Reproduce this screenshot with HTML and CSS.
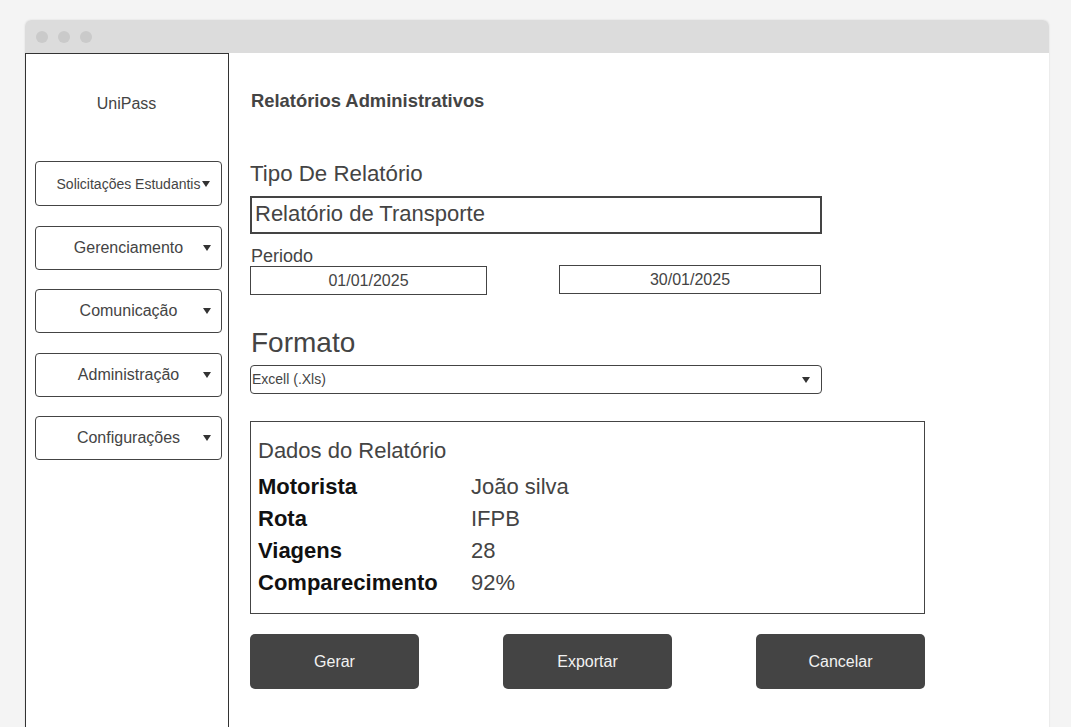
FILE: index.html
```html
<!DOCTYPE html>
<html lang="pt">
<head>
<meta charset="utf-8">
<title>UniPass - Relatórios Administrativos</title>
<link rel="stylesheet" href="styles.css">
</head>
<body>
<div class="window">
  <div class="titlebar">
    <span class="dot"></span><span class="dot"></span><span class="dot"></span>
  </div>
  <div class="content">
    <aside class="sidebar">
      <div class="brand">UniPass</div>
      <nav class="menu">
        <div class="menu-item small">Solicitações Estudantis<span class="caret"></span></div>
        <div class="menu-item">Gerenciamento<span class="caret"></span></div>
        <div class="menu-item">Comunicação<span class="caret"></span></div>
        <div class="menu-item">Administração<span class="caret"></span></div>
        <div class="menu-item">Configurações<span class="caret"></span></div>
      </nav>
    </aside>
    <main class="main">
      <h1 class="page-title">Relatórios Administrativos</h1>
      <div class="label-lg">Tipo De Relatório</div>
      <div class="type-input">Relatório de Transporte</div>
      <div class="label-md">Periodo</div>
      <div class="dates">
        <div class="date date-start">01/01/2025</div>
        <div class="date date-end">30/01/2025</div>
      </div>
      <div class="label-xl">Formato</div>
      <div class="select">Excell (.Xls)<span class="caret"></span></div>
      <section class="report">
        <div class="report-title">Dados do Relatório</div>
        <div class="report-grid">
          <div class="k">Motorista</div><div class="v">João silva</div>
          <div class="k">Rota</div><div class="v">IFPB</div>
          <div class="k">Viagens</div><div class="v">28</div>
          <div class="k">Comparecimento</div><div class="v">92%</div>
        </div>
      </section>
      <div class="actions">
        <button class="btn">Gerar</button>
        <button class="btn">Exportar</button>
        <button class="btn">Cancelar</button>
      </div>
    </main>
  </div>
</div>
</body>
</html>
```
FILE: styles.css
```css
* { box-sizing: border-box; }
html, body { margin: 0; padding: 0; }
body {
  background: #f4f4f4;
  font-family: "Liberation Sans", Arial, sans-serif;
  color: #444;
  padding: 20px 0 0 25px;
  height: 727px;
  overflow: hidden;
}
.window {
  width: 1024px;
  height: 720px;
  background: #fff;
  border-radius: 6px 6px 0 0;
  box-shadow: 0 0 2px rgba(0,0,0,0.12);
  overflow: hidden;
}
.titlebar {
  height: 33px;
  background: #dcdcdc;
  display: flex;
  align-items: center;
  gap: 10px;
  padding-left: 11px;
}
.dot {
  width: 12px;
  height: 12px;
  border-radius: 50%;
  background: #cacaca;
}
.content {
  display: flex;
  height: 690px;
}
.sidebar {
  width: 204px;
  border: 1px solid #333;
  border-bottom: none;
  padding: 40px 6px 0 9px;
}
.brand {
  font-size: 16px;
  line-height: 20px;
  text-align: center;
  padding-right: 4px;
}
.menu {
  margin-top: 47px;
  display: flex;
  flex-direction: column;
  gap: 19.5px;
}
.menu-item {
  position: relative;
  width: 187px;
  height: 44px;
  border: 1px solid #444;
  border-radius: 4px;
  display: flex;
  align-items: center;
  justify-content: center;
  font-size: 16px;
  color: #444;
}
.menu-item.small { font-size: 14px; height: 45px; }
.caret {
  position: absolute;
  right: 10px;
  top: 50%;
  margin-top: -3px;
  width: 0;
  height: 0;
  border-left: 4px solid transparent;
  border-right: 4px solid transparent;
  border-top: 6px solid #333;
}
.menu-item.small .caret { right: 11px; }
.main {
  flex: 1;
  padding: 38px 0 0 21px;
}
.page-title {
  margin: 0;
  font-size: 18.4px;
  line-height: 20px;
  font-weight: bold;
  color: #444;
  padding-left: 1px;
}
.label-lg {
  margin-top: 50px;
  font-size: 22.3px;
  line-height: 26px;
}
.type-input {
  margin-top: 9px;
  width: 572px;
  height: 38px;
  border: 2px solid #444;
  font-size: 22px;
  line-height: 32px;
  padding: 0 3px;
}
.label-md {
  margin-top: 12px;
  font-size: 18px;
  line-height: 20px;
  padding-left: 1px;
}
.dates {
  display: flex;
  align-items: flex-start;
  gap: 72px;
}
.date {
  height: 29px;
  border: 1px solid #444;
  font-size: 16px;
  line-height: 27px;
  text-align: center;
}
.date-start { width: 237px; }
.date-end { width: 262px; margin-top: -1px; }
.label-xl {
  margin-top: 32px;
  font-size: 28px;
  line-height: 32px;
  padding-left: 1px;
}
.select {
  position: relative;
  margin-top: 6px;
  width: 572px;
  height: 29px;
  border: 1px solid #444;
  border-radius: 4px;
  font-size: 14px;
  line-height: 27px;
  padding-left: 1px;
}
.select .caret { right: 11px; }
.report {
  margin-top: 27px;
  width: 675px;
  height: 193px;
  border: 1px solid #444;
  padding: 16px 0 0 7px;
}
.report-title {
  font-size: 22px;
  line-height: 26px;
}
.report-grid {
  margin-top: 7px;
  display: grid;
  grid-template-columns: 213px 1fr;
  grid-auto-rows: 32px;
  align-items: center;
  font-size: 22px;
}
.k { font-weight: bold; color: #111; }
.v { color: #444; }
.actions {
  margin-top: 20px;
  display: flex;
  gap: 84px;
}
.btn {
  width: 169px;
  height: 55px;
  border: none;
  border-radius: 5px;
  background: #444;
  color: #f2f2f2;
  font-family: "Liberation Sans", Arial, sans-serif;
  font-size: 16px;
  padding: 0;
}
```
